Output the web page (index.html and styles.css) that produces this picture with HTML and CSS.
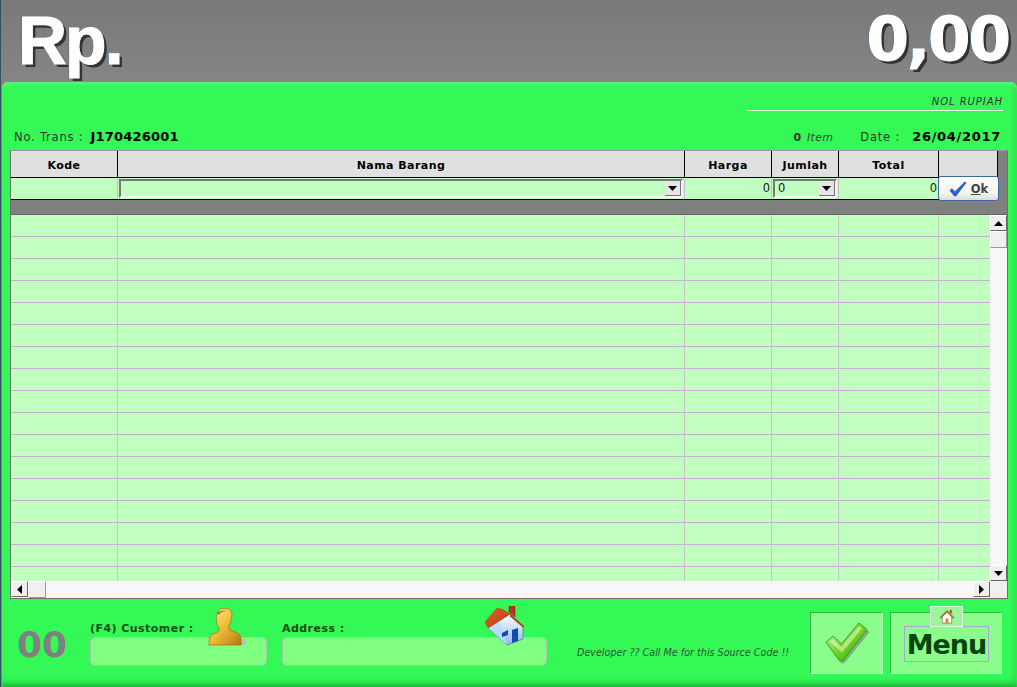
FILE: index.html
```html
<!DOCTYPE html>
<html lang="id">
<head>
<meta charset="utf-8">
<title>Transaksi</title>
<link rel="stylesheet" href="styles.css">
</head>
<body>
<div class="app">
  <header class="top">
    <div class="big big-left">Rp.</div>
    <div class="big">0,00</div>
  </header>
  <main class="panel">
    <div class="words"><span>NOL RUPIAH</span></div>
    <div class="info">
      <div class="info-left">No. Trans :<b>J170426001</b></div>
      <div class="info-right">
        <span class="count"><b>0</b> <i>Item</i></span>
        <span class="date">Date :<b>26/04/2017</b></span>
      </div>
    </div>
    <section class="grid">
      <div class="cols head">
        <div>Kode</div><div>Nama Barang</div><div>Harga</div><div>Jumlah</div><div>Total</div><div></div>
      </div>
      <div class="cols entry">
        <div></div>
        <div class="combo-cell"><div class="combo"><span></span><span class="drop"><svg viewBox="0 0 9 5" class="tri"><path d="M0 0h9L4.500 5z"/></svg></span></div></div>
        <div class="num">0</div>
        <div class="combo-cell"><div class="combo"><span class="combo-val">0</span><span class="drop"><svg viewBox="0 0 9 5" class="tri"><path d="M0 0h9L4.500 5z"/></svg></span></div></div>
        <div class="num">0</div>
        <div></div>
      </div>
      <button class="ok" type="button">
        <svg viewBox="0 0 18 16" class="ok-check"><path d="M1 9.500l2-1.800 3 3L15.800 1l1.200.7L6.800 15H5.500z" fill="#2a62d8" stroke="#12308a" stroke-width=".6"/></svg>
        <span><u>O</u>k</span>
      </button>
      <div class="band"></div>
      <div class="body">
        <div class="rows">
          <div class="cols row"><div></div><div></div><div></div><div></div><div></div><div></div></div>
          <div class="cols row"><div></div><div></div><div></div><div></div><div></div><div></div></div>
          <div class="cols row"><div></div><div></div><div></div><div></div><div></div><div></div></div>
          <div class="cols row"><div></div><div></div><div></div><div></div><div></div><div></div></div>
          <div class="cols row"><div></div><div></div><div></div><div></div><div></div><div></div></div>
          <div class="cols row"><div></div><div></div><div></div><div></div><div></div><div></div></div>
          <div class="cols row"><div></div><div></div><div></div><div></div><div></div><div></div></div>
          <div class="cols row"><div></div><div></div><div></div><div></div><div></div><div></div></div>
          <div class="cols row"><div></div><div></div><div></div><div></div><div></div><div></div></div>
          <div class="cols row"><div></div><div></div><div></div><div></div><div></div><div></div></div>
          <div class="cols row"><div></div><div></div><div></div><div></div><div></div><div></div></div>
          <div class="cols row"><div></div><div></div><div></div><div></div><div></div><div></div></div>
          <div class="cols row"><div></div><div></div><div></div><div></div><div></div><div></div></div>
          <div class="cols row"><div></div><div></div><div></div><div></div><div></div><div></div></div>
          <div class="cols row"><div></div><div></div><div></div><div></div><div></div><div></div></div>
          <div class="cols row"><div></div><div></div><div></div><div></div><div></div><div></div></div>
          <div class="cols row last"><div></div><div></div><div></div><div></div><div></div><div></div></div>
        </div>
        <div class="vbar">
          <span class="sbtn"><svg viewBox="0 0 9 5" class="tri"><path d="M0 5h9L4.500 0z"/></svg></span>
          <span class="sthumb-v"></span>
          <span class="strack"></span>
          <span class="sbtn"><svg viewBox="0 0 9 5" class="tri"><path d="M0 0h9L4.500 5z"/></svg></span>
        </div>
      </div>
      <div class="hbar">
        <span class="sbtn"><svg viewBox="0 0 5 9" class="tri-h"><path d="M5 0v9L0 4.500z"/></svg></span>
        <span class="sthumb-h"></span>
        <span class="strack"></span>
        <span class="sbtn"><svg viewBox="0 0 5 9" class="tri-h"><path d="M0 0v9l5-4.500z"/></svg></span>
        <span class="corner"></span>
      </div>
    </section>
    <footer class="foot">
      <div class="zero">00</div>
      <div class="field f-customer">
        <label>(F4) Customer :</label>
        <div class="box"></div>
        <svg class="ic-person" viewBox="0 0 40 40">
          <defs>
            <linearGradient id="gold" x1="0" y1="0" x2="1" y2="1"><stop offset="0" stop-color="#fff0a0"/><stop offset=".5" stop-color="#eebb30"/><stop offset="1" stop-color="#b07812"/></linearGradient>
          </defs>
          <ellipse cx="37" cy="36" rx="3" ry="3.500" fill="#b8c4b8"/>
          <path d="M13 1.500c5-1.500 11-.5 12 4 .7 4-.5 9-2 12-1 2-1.500 4-.5 5.500 3 2 8 2.500 11 6 1.500 2 1.500 7 1.500 10.500H1c0-4 .5-8 2-10 2.500-2.500 7-3 9-5 .5-1.500-1-3-2-6C8.500 13 7.500 5 13 1.500z" fill="url(#gold)" stroke="#9a6c12" stroke-width=".7"/>
          <path d="M9 6c2-2.500 7-3.500 11-2.500-3 .5-7 1.500-8.500 4.500z" fill="#8a5f10" opacity=".7"/>
        </svg>
      </div>
      <div class="field f-address">
        <label>Address :</label>
        <div class="box"></div>
        <svg class="ic-house" viewBox="0 0 42 42">
          <defs>
            <linearGradient id="wall" x1="0" y1="0" x2="0" y2="1"><stop offset="0" stop-color="#fff"/><stop offset="1" stop-color="#86bdf0"/></linearGradient>
            <linearGradient id="roof" x1="0" y1="0" x2="1" y2="1"><stop offset="0" stop-color="#e2622c"/><stop offset="1" stop-color="#b83c10"/></linearGradient>
          </defs>
          <path d="M24 0h6v11l-6-5z" fill="#b8332a" stroke="#7a2018" stroke-width=".5"/>
          <path d="M3 22L25 8l13 12v13l-16 6z" fill="url(#wall)" stroke="#6a7488" stroke-width=".8"/>
          <path d="M3 22l12-6 7 23z" fill="#b8dcf8" opacity=".8"/>
          <path d="M0 16L12 2l6 1.500L25 8 3 22z" fill="url(#roof)" stroke="#b0481c" stroke-width=".5"/>
          <path d="M25 8l14 12-1 1.500L25 10.500z" fill="#b83c10"/>
          <path d="M17 27l6-3v5l-6 2z" fill="#0d4fb0"/>
          <path d="M27 24l6-2v13l-6 2z" fill="#0d4fb0"/>
        </svg>
      </div>
      <div class="dev">Developer ?? Call Me for this Source Code !!</div>
      <button class="action act-ok" type="button">
        <svg viewBox="0 0 44 42" class="big-check">
          <defs><linearGradient id="gc" x1="0" y1="0" x2="1" y2="1"><stop offset="0" stop-color="#d8f7b0"/><stop offset=".55" stop-color="#6fd01e"/><stop offset="1" stop-color="#16a008"/></linearGradient></defs>
          <path d="M2 21l6.500-6 8.500 8L33 2.500l1 .5 10 5.500-25 31-3 1.500z" fill="#7a6f8a" opacity=".55" transform="translate(1 1)"/>
          <path d="M1 20l7-6 8.500 8L34 1l8 6.500-24 31-3 1z" fill="url(#gc)" stroke="#169a10" stroke-width=".8"/>
          <path d="M5 20l3-3 8 8L34 4l3 2.500-20 24z" fill="#fff" opacity=".45"/>
        </svg>
      </button>
      <button class="action act-menu" type="button">
        <span class="menu-label">Menu</span>
        <span class="menu-tab">
          <svg viewBox="0 0 16 16" class="ic-mini">
            <path d="M11 1h2v4l-2-1z" fill="#b8332a"/>
            <path d="M3 8v7h10V8L8 3z" fill="#fff" stroke="#6a5a3a" stroke-width=".6"/>
            <path d="M0.500 9L8 1.500 15.500 9l-1 .8L8 3.500 1.500 9.800z" fill="#c8801e" stroke="#7a4a10" stroke-width=".5"/>
            <path d="M6.500 10h3v5h-3z" fill="#d8901e"/>
          </svg>
        </span>
      </button>
    </footer>
  </main>
</div>
</body>
</html>
```
FILE: styles.css
```css
* { box-sizing: border-box; }
html, body { margin: 0; padding: 0; width: 1017px; height: 687px; overflow: hidden; }
body { font-family: "DejaVu Sans", Verdana, sans-serif; }

.app {
  width: 1017px; height: 687px;
  display: flex; flex-direction: column;
  background: linear-gradient(#797979, #858585 82px);
  border-left: 1px solid #33505f;
}

.top {
  height: 82px; flex: none;
  display: flex; justify-content: space-between; align-items: flex-start;
  padding: 0 8px 0 17px;
}
.big {
  font-family: "DejaVu Sans", Verdana, sans-serif;
  font-weight: 700; font-size: 61px; line-height: 78px;
  color: #fff; letter-spacing: -2px;
  -webkit-text-stroke: 1px #fff;
  text-shadow: -1px 0 0 #3a6ea8, 3px 3px 0 #333;
}
.big-left { font-family: "Liberation Sans", Arial, sans-serif; font-size: 68px; line-height: 80px; letter-spacing: -2px; }

.panel {
  flex: 1; margin-left: 1px; position: relative;
  background: #33f855;
  border-radius: 6px 6px 0 0;
  box-shadow: inset 0 3px 4px -1px #66f67f, inset 0 -8px 6px -4px #18a832, inset -7px 0 6px -5px #2bd94a;
}

.words { padding: 13px 14px 0 0; display: flex; justify-content: flex-end; }
.words span {
  width: 256px; text-align: right; display: block;
  font-size: 10px; letter-spacing: .95px; line-height: 14px; height: 16px; font-style: italic; color: #333;
  border-bottom: 1px solid #e8ffe8;
}

.info {
  display: flex; justify-content: space-between; align-items: baseline;
  padding: 18px 16px 0 12px; height: 39px;
  font-size: 11.500px; letter-spacing: .8px; color: #333;
}
.info b { font-size: 13px; letter-spacing: .2px; color: #000; margin-left: 7px; }
.info-right { display: flex; align-items: baseline; }
.count { font-size: 11px; letter-spacing: .3px; margin-right: 27px; color: #444; }
.count b { font-size: 11px; color: #333; margin: 0 2px 0 0; }
.date b { margin-left: 12px; letter-spacing: .7px; }

.grid {
  position: relative; margin-left: 8px; width: 998px; height: 449px;
  background: #808080; border: 1px solid #6f6f6f;
  border-top: 1px solid #999;
  display: flex; flex-direction: column;
}
.cols { display: grid; grid-template-columns: 107px 567px 87px 67px 100px 59px; width: 987px; flex: none; }
.head { height: 27px; background: #e0e0e0; border-bottom: 1px solid #000; }
.head > div {
  display: flex; align-items: center; justify-content: center;
  padding-top: 2px;
  font-size: 11px; letter-spacing: .45px; font-weight: 700; color: #000;
  border-right: 1px solid #000;
}
.entry { height: 22px; background: #c0ffc0; border-bottom: 1px solid #000; }
.entry > div:last-child { background: #808080; }
.entry > div { border-right: 1px solid #c0c0c0; }
.num { font-size: 11.500px; line-height: 20px; text-align: right; padding-right: 1px; color: #222; }
.combo-cell { padding: 1px; }
.combo {
  height: 19px; display: flex; justify-content: space-between; align-items: stretch;
  border: 2px solid; border-color: #777 #f4f4f4 #f4f4f4 #777;
  background: #c0ffc0;
  font-size: 11.500px; line-height: 15px; color: #222;
}
.combo-val { padding-left: 3px; }
.drop {
  width: 16px; background: #e6e6e6; display: flex; align-items: center; justify-content: center;
  border-right: 1px solid #777; border-bottom: 1px solid #777;
}
.tri { width: 9px; height: 5px; fill: #000; }
.tri-h { width: 5px; height: 9px; fill: #000; }

.ok {
  position: absolute; left: 927px; top: 25px; width: 61px; height: 25px;
  display: flex; align-items: center; justify-content: center; gap: 4px;
  background: linear-gradient(#fff, #f4f4f0 70%, #dcdcd8);
  border: 1px solid #3c6a9c; border-radius: 3px;
  font: 700 11.500px "DejaVu Sans", sans-serif; color: #444; padding: 0;
}
.ok-check { width: 18px; height: 16px; }

.band { height: 15px; background: #808080; flex: none; border-bottom: 1px solid #666; }
.body { display: flex; height: 366px; flex: none; }
.rows { width: 979px; height: 366px; overflow: hidden; background: #c0ffc0; }
.row { height: 22px; border-bottom: 1px solid #c8aed2; }
.row > div { border-right: 1px solid #c0c8c0; height: 22px; }
.row.last { border-bottom: 0; }

.vbar { width: 17px; display: flex; flex-direction: column; background: repeating-conic-gradient(#fff 0 25%, #f0f0f0 0 50%) 0 0 / 2px 2px; }
.hbar { height: 17px; flex: none; display: flex; background: repeating-conic-gradient(#fff 0 25%, #f0f0f0 0 50%) 0 0 / 2px 2px; }
.sbtn {
  flex: none; width: 17px; height: 16px; display: flex; align-items: center; justify-content: center;
  background: #efefef;
  border: 1px solid; border-color: #fff #666 #666 #fff;
}
.sthumb-v { flex: none; height: 17px; background: #efefef; border: 1px solid; border-color: #fff #999 #999 #fff; }
.sthumb-h { flex: none; width: 18px; background: #efefef; border: 1px solid; border-color: #fff #999 #999 #fff; }
.strack { flex: 1; }
.corner { flex: none; width: 17px; background: #efefef; }

.foot { position: relative; height: 89px; display: flex; align-items: flex-start; }
.zero { width: 88px; padding: 24px 0 0 15px; font-size: 36px; line-height: 44px; font-weight: 700; color: #808080; flex: none; }
.field { position: relative; flex: none; padding-top: 23px; }
.f-customer { width: 192px; }
.f-address { width: 265px; }
.field label { display: block; height: 16px; font-size: 11px; letter-spacing: .45px; line-height: 14px; font-weight: 700; color: #124d1c; }
.box { height: 29px; margin-top: -1px; background: #80ff80; border: 1px solid #a8c8a8; border-radius: 5px; }
.f-customer .box { width: 177px; }
.ic-person { position: absolute; left: 118px; top: 8px; width: 38px; height: 39px; }
.ic-house { position: absolute; left: 203px; top: 7px; width: 42px; height: 42px; }

.dev { flex: none; width: 263px; padding: 47px 0 0 30px; font-size: 9.600px; line-height: 14px; font-style: italic; color: #2b5a35; white-space: nowrap; }
.action {
  flex: none; position: relative; margin-top: 13px; height: 62px; padding: 0;
  background: #8bfd8b;
  border: 1px solid; border-color: #2db43e #b8ffb8 #b8ffb8 #2db43e;
  display: flex; align-items: center; justify-content: center;
}
.act-ok { width: 73px; margin-right: 7px; }
.big-check { width: 44px; height: 42px; }
.act-menu { width: 112px; }
.menu-label {
  display: block; width: 85px; height: 36px; margin-left: 1px;
  border: 1px solid #a8a8d8;
  font: 700 27px/36px "DejaVu Sans", sans-serif; color: #0a4510; text-align: center;
  letter-spacing: -1px; position: relative; top: 1px;
}
.menu-tab {
  position: absolute; left: 39px; top: -7px; width: 33px; height: 21px;
  background: #9cf59c; border: 1px solid #e0ffe0;
  display: flex; align-items: center; justify-content: center;
}
.ic-mini { width: 16px; height: 15px; }
```
